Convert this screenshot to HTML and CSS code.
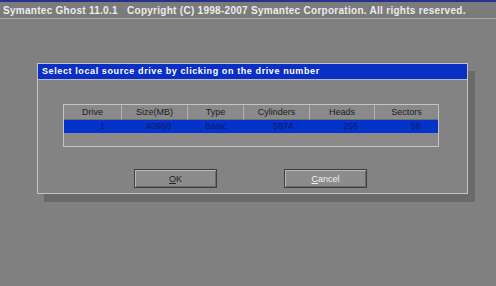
FILE: index.html
```html
<!DOCTYPE html>
<html lang="en">
<head>
    <meta charset="UTF-8">
    <title>Symantec Ghost 11.0.1</title>
    <link rel="stylesheet" href="styles.css">
</head>
<body>
    <div class="topbar">Symantec Ghost 11.0.1&nbsp;&nbsp;&nbsp;Copyright (C) 1998-2007 Symantec Corporation. All rights reserved.</div>

    <div class="dialog">
        <div class="dialog-title">Select local source drive by clicking on the drive number</div>

        <div class="drives">
            <div class="head">Drive</div>
            <div class="head">Size(MB)</div>
            <div class="head">Type</div>
            <div class="head">Cylinders</div>
            <div class="head">Heads</div>
            <div class="head last">Sectors</div>

            <div class="cell">1</div>
            <div class="cell">40960</div>
            <div class="cell">Basic</div>
            <div class="cell">5874</div>
            <div class="cell">255</div>
            <div class="cell">56</div>

            <div class="empty"></div>
        </div>

        <div class="buttons">
            <button class="btn ok"><u>O</u>K</button>
            <button class="btn cancel"><u>C</u>ancel</button>
        </div>
    </div>
</body>
</html>
```

FILE: styles.css
```css
body {
    margin: 0;
    background: #808080;
    font-family: "Liberation Sans", Arial, sans-serif;
    font-size: 9px;
    height: 286px;
    overflow: hidden;
}
.topbar {
    height: 16px;
    line-height: 18px;
    padding-left: 3px;
    border-top: 2px solid #23318f;
    border-bottom: 1px solid #a9a9a9;
    background: #7b7b7b;
    color: #ececec;
    font-weight: bold;
    font-size: 10px;
    letter-spacing: 0.28px;
    white-space: nowrap;
}
.dialog {
    margin: 44px 0 0 37px;
    width: 429px;
    height: 129px;
    border: 1px solid #c4c4c4;
    background: #838383;
    box-shadow: 7px 8px 0 #6a6a6a;
}
.dialog-title {
    height: 15px;
    line-height: 15px;
    padding-left: 4px;
    background: #0a2fc4;
    border-bottom: 1px solid #b8b8c8;
    color: #ffffff;
    font-weight: bold;
    font-size: 9px;
    letter-spacing: 0.6px;
}
.drives {
    display: grid;
    grid-template-columns: 58px 66px 56px 66px 65px 63px;
    grid-template-rows: 15px 13px 13px;
    width: 374px;
    margin: 24px 0 0 25px;
    border: 1px solid #c4c4c4;
    background: #8a8a8a;
}
.head {
    line-height: 15px;
    text-align: center;
    color: #1c1c1c;
    border-right: 1px solid #b4b4b4;
    border-bottom: 1px solid #6e6e6e;
    box-sizing: border-box;
}
.head.last {
    border-right: none;
}
.cell {
    line-height: 13px;
    text-align: right;
    padding-right: 17px;
    background: #0433cc;
    color: #0b1766;
}
.empty {
    grid-column: 1 / 7;
}
.buttons {
    display: flex;
    gap: 67px;
    margin: 22px 0 0 96px;
}
.btn {
    width: 83px;
    height: 19px;
    padding: 0;
    font-family: inherit;
    font-size: 9px;
    background: #8c8c8c;
    border: 1px solid #3e3e3e;
    box-shadow: inset 1px 1px 0 #b8b8b8, inset -1px -1px 0 #6a6a6a;
    color: #222;
}
.btn.cancel {
    color: #f0f0f0;
}
```
